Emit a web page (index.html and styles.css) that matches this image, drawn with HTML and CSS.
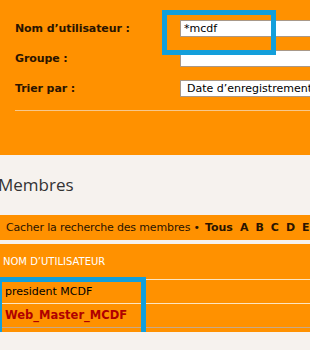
FILE: index.html
```html
<!DOCTYPE html>
<html lang="fr">
<head>
<meta charset="UTF-8">
<link rel="stylesheet" href="styles.css">
<title>Membres</title>
</head>
<body>

<div class="search">
  <div class="form-row">
    <span class="label">Nom d’utilisateur :</span>
    <input type="text" class="field" value="*mcdf">
  </div>
  <div class="form-row">
    <span class="label">Groupe :</span>
    <input type="text" class="field">
  </div>
  <div class="form-row">
    <span class="label">Trier par :</span>
    <div class="field select">Date d’enregistrement</div>
  </div>
  <div class="sep"></div>
  <div class="mark mark-top"></div>
</div>

<h2 class="title">Membres</h2>

<div class="bar">
  <span>Cacher la recherche des membres &bull;</span>
  <b class="letter first">Tous</b>
  <b class="letter">A</b>
  <b class="letter">B</b>
  <b class="letter">C</b>
  <b class="letter">D</b>
  <b class="letter">E</b>
</div>

<div class="list">
  <div class="list-head">NOM D’UTILISATEUR</div>
  <div class="row">president MCDF</div>
  <div class="row admin">Web_Master_MCDF</div>
  <div class="list-foot"></div>
  <div class="mark mark-bottom"></div>
</div>

</body>
</html>
```

FILE: styles.css
```css
body {
  margin: 0;
  background-color: #f6f2ee;
  font-family: "DejaVu Sans", Verdana, sans-serif;
  font-size: 11px;
  color: #2a1400;
  overflow: hidden;
}
.search {
  position: relative;
  background-color: #ff9100;
  height: 155px;
  padding-top: 13px;
  box-sizing: border-box;
  overflow: hidden;
}
.form-row {
  display: flex;
  align-items: center;
  height: 30px;
  padding-left: 15px;
  white-space: nowrap;
}
.label {
  flex: 0 0 165px;
  font-weight: bold;
  font-size: 11px;
  letter-spacing: -0.1px;
}
.field {
  display: block;
  flex: 0 0 200px;
  height: 17px;
  box-sizing: border-box;
  margin: 0;
  padding: 0 0 0 3px;
  border: 1px solid #a89888;
  background-color: #fff;
  font-family: "DejaVu Sans", Verdana, sans-serif;
  font-size: 11px;
  color: #000;
  outline: none;
}
.select {
  padding-left: 6px;
  line-height: 15px;
}
.sep {
  margin: 7px 0 0 15px;
  height: 1px;
  background-color: #f7c88c;
}
.mark {
  position: absolute;
  border: 5px solid #139fdb;
}
.mark-top {
  left: 162px;
  top: 10px;
  width: 104px;
  height: 35px;
}
.title {
  margin: 0;
  height: 60px;
  line-height: 60px;
  font-family: "Open Sans", sans-serif;
  font-weight: normal;
  font-size: 17px;
  color: #333;
  text-indent: -2px;
}
.bar {
  display: flex;
  align-items: center;
  background-color: #ff9100;
  height: 25px;
  padding-left: 6px;
  white-space: nowrap;
  margin-bottom: 4px;
  letter-spacing: -0.15px;
}
.letter {
  margin-left: 7px;
  letter-spacing: 0;
}
.first {
  margin-left: 5px;
}
.list {
  position: relative;
  background-color: #ff9100;
}
.list-head {
  height: 35px;
  line-height: 35px;
  padding-left: 3px;
  color: #fff;
  font-size: 10px;
  border-bottom: 1px solid #fde5c0;
}
.row {
  height: 23px;
  line-height: 23px;
  padding-left: 5px;
  color: #000;
  border-bottom: 1px solid #fde5c0;
}
.admin {
  color: #b00000;
  font-weight: bold;
  font-size: 11.5px;
  border-bottom: 1px solid #c8a888;
}
.list-foot {
  height: 4px;
}
.mark-bottom {
  left: -3px;
  top: 33px;
  width: 139px;
  height: 53px;
}
```
